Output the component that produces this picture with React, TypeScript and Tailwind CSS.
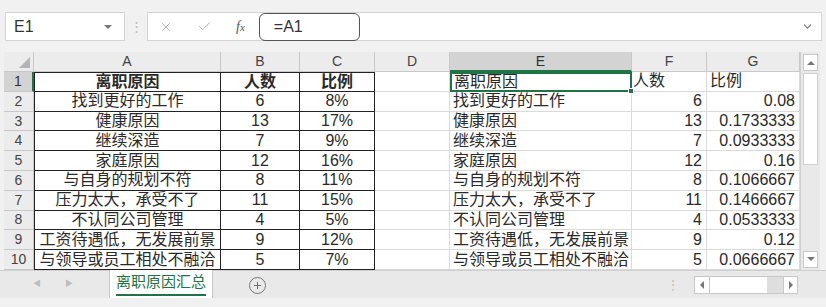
import { ChevronDown, Check, X, Plus } from "lucide-react";

const cols = ["A", "B", "C", "D", "E", "F", "G"];

const data: [string, string, string, string][] = [
  ["离职原因", "人数", "比例", "比例"],
  ["找到更好的工作", "6", "8%", "0.08"],
  ["健康原因", "13", "17%", "0.1733333"],
  ["继续深造", "7", "9%", "0.0933333"],
  ["家庭原因", "12", "16%", "0.16"],
  ["与自身的规划不符", "8", "11%", "0.1066667"],
  ["压力太大，承受不了", "11", "15%", "0.1466667"],
  ["不认同公司管理", "4", "5%", "0.0533333"],
  ["工资待遇低，无发展前景", "9", "12%", "0.12"],
  ["与领导或员工相处不融洽", "5", "7%", "0.0666667"],
];

function FormulaBar() {
  return (
    <div className="flex h-[52px] items-start pl-[5px] pt-[12px]">
      <div className="flex h-[29px] w-[120px] items-center justify-between border border-[#d4d4d4] bg-white pl-[8px] pr-[12px] text-[16px] text-[#333]">
        <span>E1</span>
        <span className="h-0 w-0 border-x-[4px] border-t-[4px] border-x-transparent border-t-[#777]" />
      </div>
      <div className="flex h-[29px] w-[22px] items-center justify-center text-[13px] text-[#bbb]">⋮</div>
      <div className="flex h-[29px] flex-1 items-center border border-[#d4d4d4] bg-white">
        <X className="ml-[11px] h-[14px] w-[14px] text-[#aaa]" strokeWidth={1.5} />
        <Check className="ml-[24px] h-[15px] w-[15px] text-[#aaa]" strokeWidth={1.5} />
        <span className="ml-[24px] font-['Liberation_Serif',serif] text-[14px] italic text-[#555]">
          f<span className="text-[11px]">x</span>
        </span>
        <div className="ml-[14px] flex h-[28px] w-[101px] items-center rounded-[6px] border border-[#555] pl-[14px] text-[16px] text-[#333]">
          =A1
        </div>
        <div className="flex-1" />
        <ChevronDown className="mr-[7px] h-[13px] w-[13px] text-[#777]" strokeWidth={2} />
      </div>
      <div className="w-[4px]" />
    </div>
  );
}

function Grid() {
  const hdr = "flex items-center justify-center border-b border-r border-[#c8c8c8] bg-[#ececec] text-[14px] text-[#444]";
  return (
    <div className="grid grid-cols-[30px_187px_79px_75px_75px_182px_75px_93px] grid-rows-[20px_repeat(10,19.8px)] bg-white">
      <div className="relative border-b border-r border-[#c8c8c8] bg-[#ececec]">
        <span className="absolute bottom-[3px] right-[3px] h-0 w-0 border-b-[11px] border-l-[11px] border-b-[#b4b4b4] border-l-transparent" />
      </div>
      {cols.map((c) =>
        c === "E" ? (
          <div key={c} className="flex items-center justify-center border-b-2 border-r border-b-[#217346] border-r-[#c8c8c8] bg-[#d3d3d3] text-[14px] text-[#333]">
            {c}
          </div>
        ) : (
          <div key={c} className={hdr}>
            {c}
          </div>
        )
      )}
      {data.map((r, i) => {
        const first = i === 0;
        return [
          <div
            key={`h${i}`}
            className={
              first
                ? "flex items-center justify-center border-b border-r-2 border-b-[#c8c8c8] border-r-[#217346] bg-[#d3d3d3] text-[14px] text-[#333]"
                : "flex items-center justify-center border-b border-r border-[#c8c8c8] bg-[#ececec] text-[14px] text-[#444]"
            }
          >
            {i + 1}
          </div>,
          <div
            key={`a${i}`}
            className={`flex items-center justify-center border-b border-l border-r border-[#222] text-[16px] text-[#2a2a2a] ${first ? "border-t font-bold" : ""}`}
          >
            {r[0]}
          </div>,
          <div
            key={`b${i}`}
            className={`flex items-center justify-center border-b border-r border-[#222] text-[16px] text-[#2a2a2a] ${first ? "border-t font-bold" : ""}`}
          >
            {r[1]}
          </div>,
          <div
            key={`c${i}`}
            className={`flex items-center justify-center border-b border-r border-[#222] text-[16px] text-[#2a2a2a] ${first ? "border-t font-bold" : ""}`}
          >
            {r[2]}
          </div>,
          <div key={`d${i}`} className="border-b border-r border-[#dadada]" />,
          first ? (
            <div key={`e${i}`} className="relative flex items-center border-2 border-[#217346] pl-[2px] text-[16px] text-[#2a2a2a]">
              {r[0]}
              <span className="absolute -bottom-[4px] -right-[4px] h-[6px] w-[6px] border border-white bg-[#217346]" />
            </div>
          ) : (
            <div key={`e${i}`} className="flex items-center border-b border-r border-[#dadada] pl-[3px] text-[16px] text-[#2a2a2a]">
              {r[0]}
            </div>
          ),
          <div
            key={`f${i}`}
            className={`flex items-center border-b border-r border-[#dadada] text-[16px] text-[#2a2a2a] ${first ? "justify-start pl-[1px]" : "justify-end pr-[4px]"}`}
          >
            {r[1]}
          </div>,
          <div
            key={`g${i}`}
            className={`flex items-center border-b border-r border-[#dadada] text-[16px] text-[#2a2a2a] ${first ? "justify-start pl-[3px]" : "justify-end pr-[4px]"}`}
          >
            {r[3]}
          </div>,
        ];
      })}
    </div>
  );
}

function VScroll() {
  return (
    <div className="flex w-[20px] flex-col border-l border-[#d0d0d0] bg-[#e9e9e9] px-[2px] py-[2px]">
      <div className="flex h-[17px] items-center justify-center border border-[#c8c8c8] bg-white">
        <span className="h-0 w-0 border-x-[4px] border-b-[4px] border-x-transparent border-b-[#777]" />
      </div>
      <div className="mt-[2px] h-[92px] border border-[#d0d0d0] bg-white" />
      <div className="flex-1" />
      <div className="flex h-[17px] items-center justify-center border border-[#c8c8c8] bg-white">
        <span className="h-0 w-0 border-x-[4px] border-t-[4px] border-x-transparent border-t-[#777]" />
      </div>
    </div>
  );
}

function TabBar() {
  return (
    <div className="flex h-[28px] items-start border-t border-[#cfcfcf] bg-[#e9e9e9] pl-[4px]">
      <div className="flex h-[27px] w-[105px] items-center pl-[29px] text-[8px] text-[#bdbdbd]">
        <span>◀</span>
        <span className="ml-[24px]">▶</span>
      </div>
      <div className="-mt-[1px] flex h-[28px] w-[104px] items-center justify-center border-x border-[#c8c8c8] bg-white">
        <span className="border-b-2 border-[#217346] pb-[1px] text-[15px] leading-[22px] text-[#217346]">离职原因汇总</span>
      </div>
      <div className="ml-[36px] mt-[6px] flex h-[17px] w-[17px] items-center justify-center rounded-full border border-[#777]">
        <Plus className="h-[11px] w-[11px] text-[#666]" strokeWidth={2} />
      </div>
      <div className="flex-1" />
      <div className="mt-[6px] text-[12px] leading-[16px] text-[#bbb]">⋮</div>
      <div className="ml-[15px] mt-[5px] flex h-[18px] w-[104px] border border-[#c8c8c8] bg-[#dedede]">
        <div className="flex w-[15px] items-center justify-center border-r border-[#c8c8c8] bg-white">
          <span className="h-0 w-0 border-y-[4px] border-r-[4px] border-y-transparent border-r-[#777]" />
        </div>
        <div className="w-[57px] bg-white" />
        <div className="flex-1" />
        <div className="flex w-[14px] items-center justify-center border-l border-[#c8c8c8] bg-white">
          <span className="h-0 w-0 border-y-[4px] border-l-[4px] border-y-transparent border-l-[#777]" />
        </div>
      </div>
      <div className="w-[28px]" />
    </div>
  );
}

export default function App() {
  return (
    <div className="h-[307px] w-[826px] overflow-hidden bg-[#f1f1f1] font-['Liberation_Sans','Noto_Sans_CJK_SC',sans-serif]">
      <FormulaBar />
      <div className="flex pl-[4px]">
        <Grid />
        <VScroll />
      </div>
      <TabBar />
    </div>
  );
}
